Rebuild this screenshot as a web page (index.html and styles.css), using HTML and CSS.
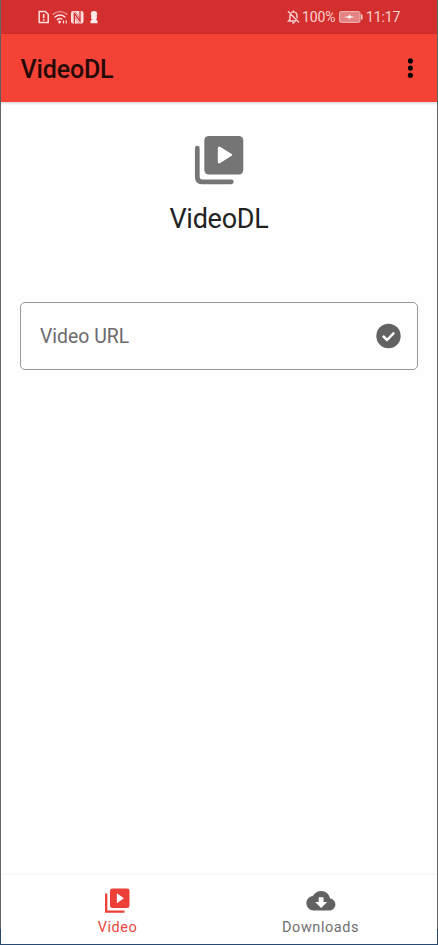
FILE: index.html
```html
<!DOCTYPE html>
<html lang="en">
<head>
<meta charset="utf-8">
<title>VideoDL</title>
<link rel="stylesheet" href="styles.css">
</head>
<body>
<div class="frame">
  <header class="status">
    <svg class="status-left" width="62" height="16" viewBox="0 0 62 16" fill="none" stroke="#ffdede">
      <path d="M3.200 2.500h5l3 2.800v8.200h-9v-11z" stroke-width="1.500"/><path d="M6.700 5v4.300M6.700 10.300v1.500" stroke-width="1.600"/>
      <g stroke-linecap="round"><path d="M16 5.300q7-5.200 14 0" stroke-width="1.300" opacity=".6"/><path d="M18 8q5-3.800 10 0M20.300 10.600q2.700-2 4.500-.6" stroke-width="1.500"/></g>
      <path d="M22.500 11.300l1.700 1.700-1.700 1.700-1.700-1.700z" fill="#ffdede" stroke="none"/><path d="M26.500 11.500v3M29.300 11.500v3" stroke-width="1.200"/>
      <rect x="34" y="2" width="12.500" height="12.500" rx="2" fill="#ffdede" stroke="none"/><path d="M37.300 14.500V4.500l5.700 7.500V2" stroke="#d32f2f" stroke-width="1.300"/><path d="M38 2.500l5 7M37.300 7.500l5 7" stroke="#d32f2f" stroke-width=".6"/>
      <path d="M57 2q3.200 0 3.200 3 0 1.400-1 2.300h.8v2.200h-.8v1.200l1.300 1v2.600h-7v-2.600l1.300-1V9.500H54V7.300h.8q-1-1-1-2.300 0-3 3.200-3z" fill="#ffe9e9" stroke="none"/>
    </svg>
    <div class="status-right">
      <svg width="13" height="14" viewBox="0 0 13 14" fill="none" stroke="#fbd0d0" stroke-width="1.400"><path d="M4 2.800q1-.8 2.500-.9 3.500.3 3.500 4v2.300M3 4.500v4.800L1.500 11H9M5.200 12.800h2.500M6.500.5V2M1 1.300l11 11.200"/></svg>
      <span class="percent">100%</span>
      <svg class="battery" width="24" height="12" viewBox="0 0 24 12"><rect x=".6" y=".6" width="20.400" height="10.800" rx="1.500" fill="#e58383" stroke="#f3b6b6"/><path d="M22 3.500h1.500v5H22z" fill="#fbd0d0"/><path d="M5 6l4.500-.8.800-1.700 1.500 1.800 4.200.7-4.700.8-.8 1.700-1-1.800z" fill="#fff"/></svg>
      <span class="clock">11:17</span>
    </div>
  </header>
  <div class="toolbar">
    <h1>VideoDL</h1>
    <svg width="6" height="20" viewBox="0 0 6 20"><circle cx="3.400" cy="2.900" r="2.550"/><circle cx="3.400" cy="10.100" r="2.550"/><circle cx="3.400" cy="17.300" r="2.550"/></svg>
  </div>
  <main>
    <svg class="logo" width="50" height="50" viewBox="0 0 50 50"><rect x="10.300" y="1" width="39" height="38.500" rx="4.500" fill="#757575"/><path d="M23.800 13.500v13q0 3 2.800 1.300l11-7q1.600-.8 0-1.800l-11-7q-2.800-1.500-2.800 1.500z" fill="#fff"/><path d="M3.300 13v29q0 4.800 4.500 4.800H37.300" fill="none" stroke="#757575" stroke-width="4.700" stroke-linecap="round"/></svg>
    <h2>VideoDL</h2>
    <div class="field">
      <span>Video URL</span>
      <svg width="26" height="26" viewBox="0 0 26 26"><circle cx="13.500" cy="13" r="12.200" fill="#626262"/><path d="M8.500 13.500l3.600 3.500 6.400-6.700" fill="none" stroke="#fff" stroke-width="2.500" stroke-linecap="round" stroke-linejoin="round"/></svg>
    </div>
  </main>
  <nav>
    <div class="tab active">
      <svg width="26" height="26" viewBox="0 0 26 26"><rect x="5" y=".5" width="19.500" height="19.500" rx="2.300" fill="#ed4038"/><path d="M11.900 5.200v10l7-5z" fill="#fff"/><path d="M1.200 5.500v18.200H19.500" fill="none" stroke="#ed4038" stroke-width="2.300"/></svg>
      <span>Video</span>
    </div>
    <div class="tab">
      <svg width="30" height="26" viewBox="0 0 30 26"><path d="M24.100 10.500C23.300 6 19.600 3 15.100 3c-3.600 0-6.700 2-8.200 5C3.100 8.400.4 11.500.4 15.200.4 19.200 3.600 22.400 7.600 22.400h15.700c3.400 0 6.100-2.700 6.100-6 0-3.100-2.400-5.600-5.300-5.900z" fill="#626262"/><path d="M12.700 9.300h4.800v4.800h3.600l-6 6-6-6h3.600z" fill="#fff"/></svg>
      <span>Downloads</span>
    </div>
  </nav>
</div>
<div class="desktop"></div>
</body>
</html>
```

FILE: styles.css
```css
* { box-sizing: border-box; }
body {
  margin: 0;
  height: 945px;
  display: flex;
  flex-direction: column;
  font-family: Roboto, sans-serif;
  background: linear-gradient(#666 929px, #294870 929px);
}
svg { display: block; flex: none; }
.frame {
  height: 944px;
  margin: 0 1px;
  display: flex;
  flex-direction: column;
  background: #fefefe;
}
.desktop { height: 1px; background: #294870; }
.status {
  height: 34px;
  padding: 0 37px 0 36px;
  display: flex;
  align-items: center;
  justify-content: space-between;
  background: #d32f2f;
}
.status-right {
  display: flex;
  align-items: center;
  color: #fbd0d0;
  font-size: 14px;
  line-height: 16px;
}
.percent { width: 34px; margin: 0 3px 0 2px; letter-spacing: -.1px; }
.clock { width: 34px; margin-left: 3px; white-space: nowrap; letter-spacing: -.1px; }
.toolbar {
  height: 68px;
  padding: 0 24px 0 19.500px;
  display: flex;
  align-items: center;
  justify-content: space-between;
  background: #f44336;
  box-shadow: 0 1px 3px rgba(0, 0, 0, .2);
}
h1 {
  margin: 4px 0 0;
  color: #250a08;
  font-size: 25px;
  font-weight: 500;
  line-height: 30px;
  letter-spacing: -.15px;
}
main {
  flex: 1;
  padding: 33px 19px 0;
  display: flex;
  flex-direction: column;
  align-items: center;
}
h2 {
  margin: 18px 0 0;
  color: #222;
  font-size: 27px;
  font-weight: 400;
  line-height: 32px;
  letter-spacing: -.25px;
}
.field {
  width: 398px;
  height: 68px;
  margin-top: 67px;
  padding: 0 16px 0 19px;
  display: flex;
  align-items: center;
  justify-content: space-between;
  border: 1px solid #999;
  border-radius: 5px;
  color: #6b6a6c;
  font-size: 19.4px;
}
nav {
  height: 69px;
  padding: 13px 15px 0;
  display: flex;
  background: #fff;
  box-shadow: 0 -1px 2px rgba(0, 0, 0, .05);
}
.tab {
  flex: 1;
  display: flex;
  flex-direction: column;
  align-items: center;
  gap: 5px;
  color: #707070;
  font-size: 14.5px;
  line-height: 18px;
  letter-spacing: .55px;
}
.active { color: #e94840; }
```
